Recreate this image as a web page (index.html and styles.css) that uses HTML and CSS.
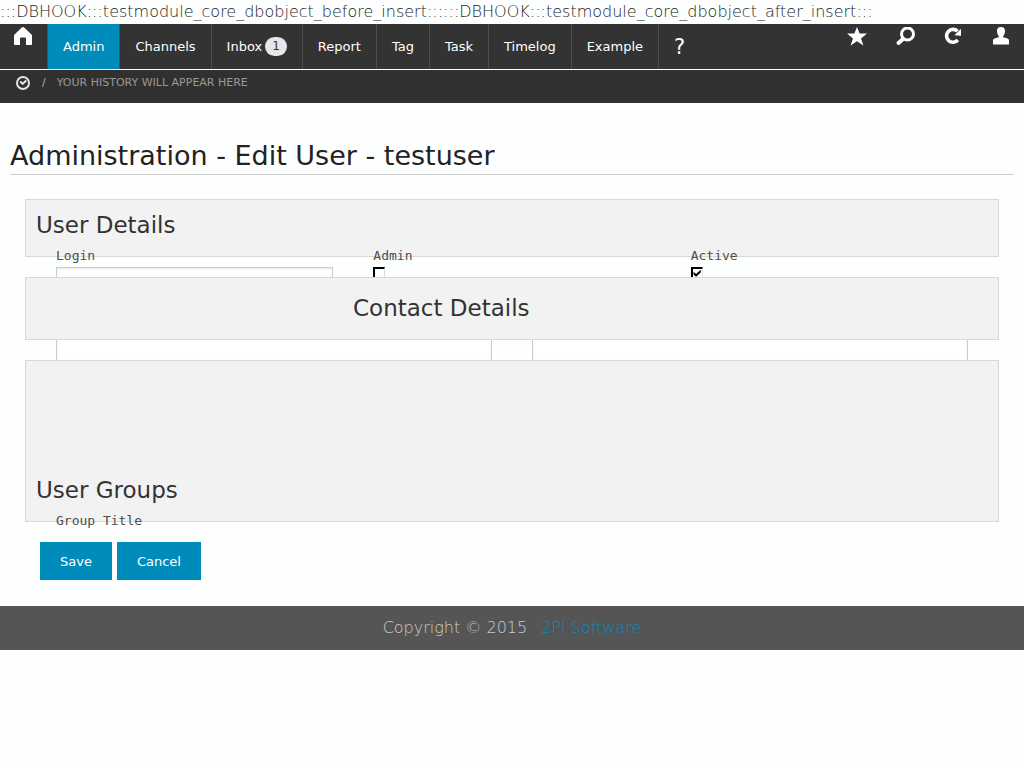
FILE: index.html
```html
<!DOCTYPE html>
<html lang="en">
<head>
<meta charset="utf-8">
<title>Administration - Edit User</title>
<link rel="stylesheet" href="styles.css">
</head>
<body>
<div class="log">:::DBHOOK:::testmodule_core_dbobject_before_insert::::::DBHOOK:::testmodule_core_dbobject_after_insert:::</div>
<header>
  <nav class="topbar">
    <a class="home" href="#" aria-label="Home"><svg width="18" height="18" viewBox="0 0 18 18" fill="#fff"><path d="M0 8 7.500 0.700Q9 -0.500 10.500 0.700L18 8V17a1 1 0 0 1-1 1H12V11.500Q12 10.500 11 10.500H7Q6 10.500 6 11.500V18H1a1 1 0 0 1-1-1Z"/></svg></a>
    <a class="item active" href="#">Admin</a>
    <a class="item" href="#">Channels</a>
    <a class="item" href="#">Inbox <span class="badge">1</span></a>
    <a class="item" href="#">Report</a>
    <a class="item" href="#">Tag</a>
    <a class="item" href="#">Task</a>
    <a class="item" href="#">Timelog</a>
    <a class="item" href="#">Example</a>
    <a class="item help" href="#">?</a>
    <div class="tools">
      <a href="#" aria-label="Favourites"><svg width="20" height="20" viewBox="0 0 20 20" fill="#fff"><path d="M10 0l2.600 6.600H20l-6 4.800L16.400 18.500 10 14.300 3.600 18.500 6 11.400 0 6.600h7.400z"/></svg></a>
      <a href="#" aria-label="Search"><svg width="20" height="20" viewBox="0 0 20 20" fill="none" stroke="#fff"><circle cx="12.500" cy="7" r="6" stroke-width="3"/><path d="M8 12 3.500 16" stroke-width="4" stroke-linecap="round"/></svg></a>
      <a href="#" aria-label="Refresh"><svg width="20" height="20" viewBox="0 0 20 20"><path d="M14.800 13A6.400 6.400 0 1 1 14.500 4.300" fill="none" stroke="#fff" stroke-width="3.600"/><path d="M18 1.800V8.800L11.500 8.200Z" fill="#fff"/></svg></a>
      <a href="#" aria-label="Account"><svg width="20" height="20" viewBox="0 0 20 20" fill="#fff"><path d="M10 0C13 0 14.200 2 14 4.500 13.900 6.500 13 8 12.200 9V10.200L16.500 11.500Q18 12 18 13.500V17.500H2V13.500Q2 12 3.500 11.500L7.800 10.200V9C7 8 6.100 6.500 6 4.500 5.800 2 7 0 10 0Z"/></svg></a>
    </div>
  </nav>
  <div class="history">
    <svg width="14" height="14" viewBox="0 0 14 14" fill="none" stroke="#e4e4e4" stroke-width="2"><circle cx="7" cy="7" r="6"/><path d="M4.200 5.500 6.700 7.800 10.300 4.500"/></svg>
    <span class="slash">/</span>
    <span>YOUR HISTORY WILL APPEAR HERE</span>
  </div>
</header>
<main>
  <h1>Administration - Edit User - testuser</h1>
  <form>
    <section class="panel details">
      <h2>User Details</h2>
      <div class="fields">
        <div class="row three">
          <div><label for="login">Login</label><input class="text" id="login" type="text"></div>
          <div><label for="admin">Admin</label><input class="check" id="admin" type="checkbox"></div>
          <div><label for="active">Active</label><input class="check" id="active" type="checkbox" checked></div>
        </div>
        <div class="row two">
          <input class="text" type="password" aria-label="Password">
          <input class="text" type="password" aria-label="Confirm password">
        </div>
      </div>
    </section>
    <section class="panel contact">
      <h2>Contact Details</h2>
    </section>
    <section class="panel groups">
      <h2>User Groups</h2>
      <div class="fields"><div class="caption">Group Title</div></div>
    </section>
    <div class="actions">
      <button type="submit">Save</button>
      <button type="button">Cancel</button>
    </div>
  </form>
</main>
<footer><span>Copyright © 2015</span><a href="#">2PI Software</a></footer>
</body>
</html>
```
FILE: styles.css
```css
* { box-sizing: border-box; }
body {
  margin: 0;
  background: #fdfefe;
  color: #222;
  font-family: "DejaVu Sans", sans-serif;
  font-size: 16px;
}
a { text-decoration: none; }
svg { display: block; }
.log { font-weight: 200; line-height: 24px; white-space: nowrap; }

.topbar { display: flex; height: 45px; background: #333; }
.home { width: 47px; padding: 3px 0 0 14px; }
.item {
  display: flex;
  align-items: center;
  padding: 0 15px;
  border-left: 1px solid #4e4e4e;
  color: #fff;
  font-size: 13px;
}
.active { background: #008cba; }
.badge {
  margin-left: 3px;
  padding: 0 7px;
  border-radius: 10px;
  background: #e7e7e7;
  color: #333;
  font-size: 12px;
  line-height: 19px;
}
.help { font-size: 21px; }
.tools { display: flex; gap: 28px; margin-left: auto; padding: 3px 13px 0 0; }
.history {
  display: flex;
  align-items: center;
  height: 33px;
  margin-top: 1px;
  padding: 0 16px 8px;
  background: #303030;
  color: #999;
  font-size: 11px;
}
.slash { padding: 0 11px 0 12px; color: #aaa; }

main { padding: 35px 10px 26px; }
h1 {
  margin: 0;
  border-bottom: 1px solid #ccc;
  font-size: 27px;
  font-weight: 400;
  line-height: 36px;
}
form { padding: 24px 15px 0; }
.panel {
  margin-bottom: 20px;
  padding: 10px;
  border: 1px solid #d8d8d8;
  background: #f2f2f2;
}
h2 {
  margin: 0;
  color: #333;
  font-size: 23px;
  font-weight: 400;
  line-height: 30px;
}
/* Fields overflow their panel and run under the panels that follow. */
.fields { height: 0; padding: 0 20px; }
.details { height: 58px; }
.contact { position: relative; height: 63px; padding: 15px 10px 10px 327px; }
.groups { position: relative; height: 162px; padding-top: 114px; }
.row { display: grid; column-gap: 40px; }
.three { grid-template-columns: repeat(3, 1fr); }
.two { grid-template-columns: repeat(2, 1fr); margin-top: 20px; }
label, .caption {
  display: block;
  padding: 6px 0 1px;
  color: #4d4d4d;
  font-family: "DejaVu Sans Mono", monospace;
  font-size: 13px;
  line-height: 20px;
}
.text {
  display: block;
  width: 100%;
  height: 37px;
  border: 1px solid #ccc;
  background: #fff;
  box-shadow: inset 0 1px 2px rgba(0, 0, 0, 0.1);
}
.check {
  appearance: none;
  display: block;
  width: 12px;
  height: 12px;
  margin: 0;
  border: 2px solid #000;
  border-right: 1px solid #ddd;
  border-bottom: 1px solid #ddd;
  background: #fff;
}
.check:checked::before {
  content: "";
  display: block;
  height: 8px;
  background: #000;
  clip-path: polygon(10% 35%, 38% 62%, 90% 10%, 90% 45%, 38% 98%, 10% 70%);
}
.actions { display: flex; gap: 5px; padding-left: 15px; }
button {
  height: 38px;
  padding: 0 20px;
  border: 0;
  background: #008cba;
  color: #fff;
  font: 13px "DejaVu Sans", sans-serif;
}
footer {
  display: flex;
  justify-content: center;
  gap: 14px;
  background: #555;
  color: #ccc;
  font-weight: 200;
  line-height: 44px;
}
footer a { color: #008cba; }
```
